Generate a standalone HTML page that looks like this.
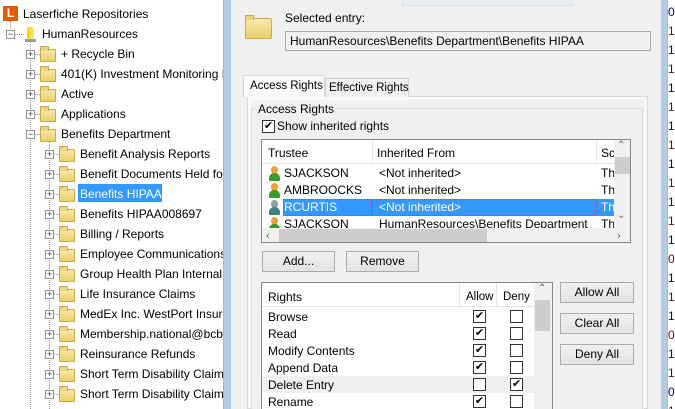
<!DOCTYPE html>
<html><head><style>
*{margin:0;padding:0;box-sizing:border-box}
body{width:675px;height:409px;overflow:hidden;background:#fff;font-family:"Liberation Sans",sans-serif;font-size:12px;color:#000;position:relative}
.a{position:absolute;white-space:nowrap}
.t{position:absolute;white-space:nowrap;line-height:14px}
.exp{position:absolute;width:9px;height:9px;border:1px solid #919191;background:#fff;font-size:9px;line-height:7px;text-align:center;color:#333}
.fold{position:absolute;width:16px;height:13px;background:linear-gradient(#f8eaa8,#e9cf6b);border:1px solid #c9a94a;border-radius:1px}
.fold:before{content:"";position:absolute;left:-1px;top:-4px;width:7px;height:4px;background:#ecd57d;border:1px solid #c9a94a;border-bottom:none;border-radius:1px 1px 0 0}
.btn{position:absolute;background:linear-gradient(#f0f0f0,#e3e3e3);border:1px solid #acacac;text-align:center;font-size:12px}
.cb{position:absolute;width:13px;height:13px;border:1px solid #333;background:#fff;font-size:11px;line-height:11px;text-align:center}
.user{position:absolute;width:10px;height:15px}
.user:before{content:"";position:absolute;left:2px;top:0;width:7px;height:8px;border-radius:50%;background:#f0a030}
.user:after{content:"";position:absolute;left:0;top:7px;width:11px;height:8px;border-radius:5px 5px 1px 1px;background:#3a9a2a}
.g:before{background:#8aa0a0}.g:after{background:#3f8080}
</style></head><body>

<!-- tree -->
<div class="a" style="left:3px;top:6px;width:15px;height:15px;background:#e65a00;color:#fff;font-weight:bold;font-size:12px;line-height:15px;text-align:center">L</div>
<div class="t" style="left:23px;top:7px">Laserfiche Repositories</div>
<div class="a" style="left:10px;top:21px;height:10px;border-left:1px dotted #999"></div>
<div class="exp" style="left:6px;top:30px">−</div>
<div class="a" style="left:15px;top:34px;width:9px;border-top:1px dotted #999"></div>
<div class="a" style="left:27px;top:27px;width:7px;height:12px;background:linear-gradient(90deg,#f6d000,#ffe866);border-radius:2px"></div>
<div class="a" style="left:25px;top:39px;width:11px;height:3px;background:#9a9a9a"></div>
<div class="t" style="left:42px;top:27px">HumanResources</div>
<div class="a" style="left:30px;top:42px;height:367px;border-left:1px dotted #999"></div>
<div class="a" style="left:49px;top:142px;height:267px;border-left:1px dotted #999"></div>

<div class="a" style="left:78px;top:184px;width:84px;height:18px;background:#3399ff"></div>
<div id="tree"></div>

<!-- left blue bar -->
<div class="a" style="left:223px;top:0;width:8px;height:409px;background:#b4cbe6;border-left:1px solid #9fb9d9"></div>
<!-- dialog -->
<div class="a" style="left:231px;top:0;width:430px;height:409px;background:#f0f0f0"></div>
<div class="a" style="left:402px;top:0;width:171px;height:6px;border:1px solid #dde3ea;border-top:none;background:#eaeef2"></div>
<!-- right blue bar -->
<div class="a" style="left:661px;top:0;width:7px;height:409px;background:#b4cbe6;border-right:1px solid #9fb9d9"></div>
<div class="a" style="left:668px;top:0;width:7px;height:409px;background:#fff;overflow:hidden" id="nums"></div>

<div class="fold" style="left:245px;top:18px;width:27px;height:21px;border-radius:2px"></div>
<div class="t" style="left:285px;top:11px">Selected entry:</div>
<div class="a" style="left:285px;top:31px;width:366px;height:20px;border:1px solid #a9a9a9;background:#f0f0f0;line-height:18px;padding-left:4px;font-size:12px">HumanResources\Benefits Department\Benefits HIPAA</div>

<!-- tabs -->
<div class="a" style="left:247px;top:96px;width:401px;height:313px;background:#f9f9f9;border:1px solid #d9d9d9"></div>
<div class="a" style="left:251px;top:100px;width:393px;height:309px;background:#f0f0f0"></div>
<div class="a" style="left:325px;top:78px;width:84px;height:19px;background:#f0f0f0;border:1px solid #d0d0d0;border-bottom:none;line-height:18px;padding-left:3px;font-size:11.5px">Effective Rights</div>
<div class="a" style="left:243px;top:75px;width:82px;height:22px;background:#f9f9f9;border:1px solid #d9d9d9;border-bottom:none;line-height:20px;padding-left:6px;font-size:11.5px">Access Rights</div>

<div class="a" style="left:251px;top:108px;width:392px;height:301px;border:1px solid #dcdcdc;border-bottom:none"></div>
<div class="t" style="left:256px;top:102px;background:#f0f0f0;padding:0 2px">Access Rights</div>
<div class="cb" style="left:262px;top:120px">✔</div>
<div class="t" style="left:277px;top:119px">Show inherited rights</div>

<!-- trustee list -->
<div class="a" style="left:261px;top:139px;width:370px;height:104px;border:1px solid #828790;background:#fff;overflow:hidden">
 <div class="a" style="left:0;top:0;width:352px;height:24px;border-bottom:1px solid #e5e5e5"></div>
 <div class="a" style="left:110px;top:0;height:24px;border-left:1px solid #e5e5e5"></div>
 <div class="a" style="left:334px;top:0;height:24px;border-left:1px solid #e5e5e5"></div>
 <div class="t" style="left:6px;top:6px">Trustee</div>
 <div class="t" style="left:115px;top:6px">Inherited From</div>
 <div class="t" style="left:339px;top:6px">Sc</div>
 <div class="user" style="left:7px;top:26px"></div><div class="t" style="left:22px;top:26px">SJACKSON</div><div class="t" style="left:117px;top:26px">&lt;Not inherited&gt;</div><div class="t" style="left:339px;top:26px">Th</div>
 <div class="user" style="left:7px;top:43px"></div><div class="t" style="left:22px;top:43px">AMBROOCKS</div><div class="t" style="left:117px;top:43px">&lt;Not inherited&gt;</div><div class="t" style="left:339px;top:43px">Th</div>
 <div class="a" style="left:21px;top:59px;width:331px;height:17px;background:#3399ff"></div>
 <div class="a" style="left:21px;top:59px;width:89px;height:17px;border:1px dotted #b06000"></div>
 <div class="a" style="left:110px;top:59px;width:225px;height:17px;border:1px dotted #b06000"></div>
 <div class="user g" style="left:7px;top:60px"></div><div class="t" style="left:22px;top:60px;color:#fff">RCURTIS</div><div class="t" style="left:117px;top:60px;color:#fff">&lt;Not inherited&gt;</div><div class="t" style="left:339px;top:60px;color:#fff">Th</div>
 <div class="user" style="left:7px;top:77px"></div><div class="t" style="left:22px;top:77px">SJACKSON</div><div class="t" style="left:117px;top:77px">HumanResources\Benefits Department</div><div class="t" style="left:339px;top:77px">Th</div>
 <div class="a" style="left:352px;top:0;width:16px;height:88px;background:#f0f0f0"></div>
 <div class="a" style="left:353px;top:17px;width:15px;height:17px;background:#cdcdcd"></div>
 <div class="t" style="left:355px;top:-1px;font-size:10px;color:#606060">⌃</div>
 <div class="t" style="left:355px;top:69px;font-size:10px;color:#606060">⌄</div>
 <div class="a" style="left:0;top:88px;width:368px;height:16px;background:#f0f0f0"></div>
 <div class="a" style="left:17px;top:89px;width:208px;height:14px;background:#cdcdcd"></div>
 <div class="t" style="left:4px;top:89px;font-size:11px;color:#606060">&lsaquo;</div>
 <div class="t" style="left:355px;top:89px;font-size:11px;color:#606060">&rsaquo;</div>
</div>

<div class="btn" style="left:262px;top:251px;width:73px;height:21px;line-height:19px">Add...</div>
<div class="btn" style="left:346px;top:251px;width:73px;height:21px;line-height:19px">Remove</div>

<!-- rights list -->
<div class="a" style="left:261px;top:282px;width:292px;height:127px;border:1px solid #828790;border-bottom:none;background:#fff;overflow:hidden">
 <div class="a" style="left:0;top:0;width:272px;height:24px;border-bottom:1px solid #e5e5e5"></div>
 <div class="a" style="left:197px;top:0;height:24px;border-left:1px solid #e5e5e5"></div>
 <div class="a" style="left:234px;top:0;height:24px;border-left:1px solid #e5e5e5"></div>
 <div class="t" style="left:6px;top:7px">Rights</div>
 <div class="t" style="left:204px;top:7px;font-size:11.5px">Allow</div>
 <div class="t" style="left:241px;top:7px;font-size:11.5px">Deny</div>
 <div class="a" style="left:0;top:93px;width:272px;height:17px;background:#f0f0f0"></div>
 <div class="t" style="left:6px;top:27px">Browse</div>
 <div class="t" style="left:6px;top:44px">Read</div>
 <div class="t" style="left:6px;top:61px">Modify Contents</div>
 <div class="t" style="left:6px;top:78px">Append Data</div>
 <div class="t" style="left:6px;top:95px">Delete Entry</div>
 <div class="t" style="left:6px;top:112px">Rename</div>
 <div class="cb" style="left:211px;top:27px">✔</div><div class="cb" style="left:248px;top:27px"></div>
 <div class="cb" style="left:211px;top:44px">✔</div><div class="cb" style="left:248px;top:44px"></div>
 <div class="cb" style="left:211px;top:61px">✔</div><div class="cb" style="left:248px;top:61px"></div>
 <div class="cb" style="left:211px;top:78px">✔</div><div class="cb" style="left:248px;top:78px"></div>
 <div class="cb" style="left:211px;top:95px"></div><div class="cb" style="left:248px;top:95px">✔</div>
 <div class="cb" style="left:211px;top:112px">✔</div><div class="cb" style="left:248px;top:112px"></div>
 <div class="a" style="left:272px;top:0;width:18px;height:127px;background:#f0f0f0"></div>
 <div class="a" style="left:273px;top:17px;width:15px;height:31px;background:#cdcdcd"></div>
 <div class="t" style="left:276px;top:-1px;font-size:10px;color:#606060">⌃</div>
</div>

<div class="btn" style="left:560px;top:282px;width:74px;height:21px;line-height:19px">Allow All</div>
<div class="btn" style="left:560px;top:313px;width:74px;height:21px;line-height:19px">Clear All</div>
<div class="btn" style="left:560px;top:344px;width:74px;height:21px;line-height:19px">Deny All</div>

<script>
var L1=["+ Recycle Bin","401(K) Investment Monitoring Reports","Active","Applications","Benefits Department"];
var L2=["Benefit Analysis Reports","Benefit Documents Held for","Benefits HIPAA","Benefits HIPAA008697","Billing / Reports","Employee Communications","Group Health Plan Internal Audit","Life Insurance Claims","MedEx Inc. WestPort Insurance","Membership.national@bcbs","Reinsurance Refunds","Short Term Disability Claims","Short Term Disability Claims"];
var h="";
L1.forEach(function(s,i){var y=54+i*20;
h+='<div class="exp" style="left:26px;top:'+(y-4)+'px">'+(i==4?'−':'+')+'</div><div class="a" style="left:35px;top:'+y+'px;width:5px;border-top:1px dotted #999"></div><div class="fold" style="left:40px;top:'+(y-5)+'px"></div><div class="t" style="left:61px;top:'+(y-7)+'px;width:162px;overflow:hidden">'+s+'</div>';});
L2.forEach(function(s,i){var y=154+i*20;
h+='<div class="exp" style="left:45px;top:'+(y-4)+'px">+</div><div class="a" style="left:54px;top:'+y+'px;width:5px;border-top:1px dotted #999"></div><div class="fold" style="left:59px;top:'+(y-5)+'px"></div><div class="t" style="left:80px;top:'+(y-7)+'px;width:143px;overflow:hidden;'+(i==2?'color:#fff':'')+'">'+s+'</div>';});
document.getElementById('tree').outerHTML=h;
var n=["01","13","13","13","14","14","12","13","12","13","13","13","13","01","13","13","12","01","13","13","01","13"],c="";
n.forEach(function(s,i){c+='<div class="t" style="left:0;top:'+(5+i*19)+'px;color:'+(i%2?'#800000':'#000080')+'">'+s+'</div>';});
document.getElementById('nums').innerHTML=c;
</script>
</body></html>
